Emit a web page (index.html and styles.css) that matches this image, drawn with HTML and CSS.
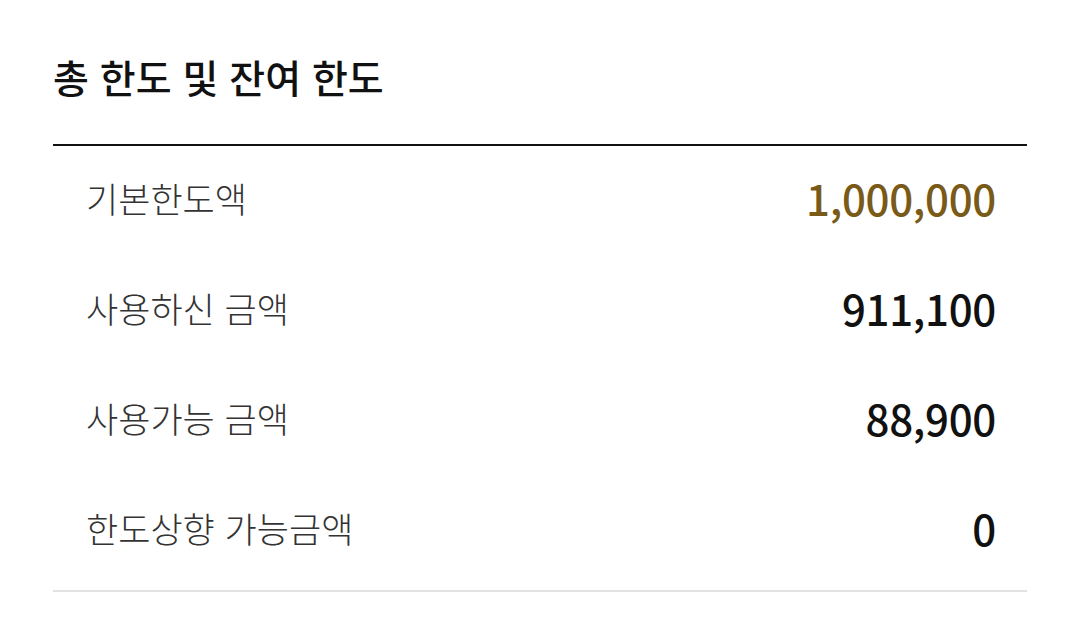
FILE: index.html
```html
<!DOCTYPE html>
<html lang="ko">
<head>
<meta charset="utf-8">
<link rel="stylesheet" href="styles.css">
</head>
<body>
<section class="limit">
  <h2 class="limit-title">총 한도 및 잔여 한도</h2>
  <ul class="limit-list">
    <li class="limit-row"><span class="label">기본한도액</span><span class="value gold">1,000,000</span></li>
    <li class="limit-row"><span class="label">사용하신 금액</span><span class="value">911,100</span></li>
    <li class="limit-row"><span class="label">사용가능 금액</span><span class="value">88,900</span></li>
    <li class="limit-row"><span class="label">한도상향 가능금액</span><span class="value">0</span></li>
  </ul>
</section>
</body>
</html>
```
FILE: styles.css
```css
html, body {
  margin: 0;
  padding: 0;
  background: #fff;
}
body {
  font-family: "Noto Sans CJK KR", "Noto Sans", sans-serif;
  color: #111;
}
.limit {
  padding: 0 49px 0 53px;
}
.limit-title {
  margin: 0;
  height: 146px;
  box-sizing: border-box;
  padding-top: 50px;
  font-size: 39px;
  line-height: 52px;
  font-weight: 500;
  color: #111;
  border-bottom: 2px solid #111;
}
.limit-list {
  list-style: none;
  margin: 0;
  padding: 2px 31px 2px 33px;
  border-bottom: 2px solid #e2e2e2;
}
.limit-row {
  display: flex;
  justify-content: space-between;
  align-items: center;
  height: 110px;
  box-sizing: border-box;
  padding-bottom: 11px;
}
.label {
  font-size: 35px;
  font-weight: 300;
  color: #333;
}
.value {
  font-size: 42px;
  font-weight: 500;
  color: #111;
  letter-spacing: -0.3px;
}
.value.gold {
  color: #7a5a18;
}
```
